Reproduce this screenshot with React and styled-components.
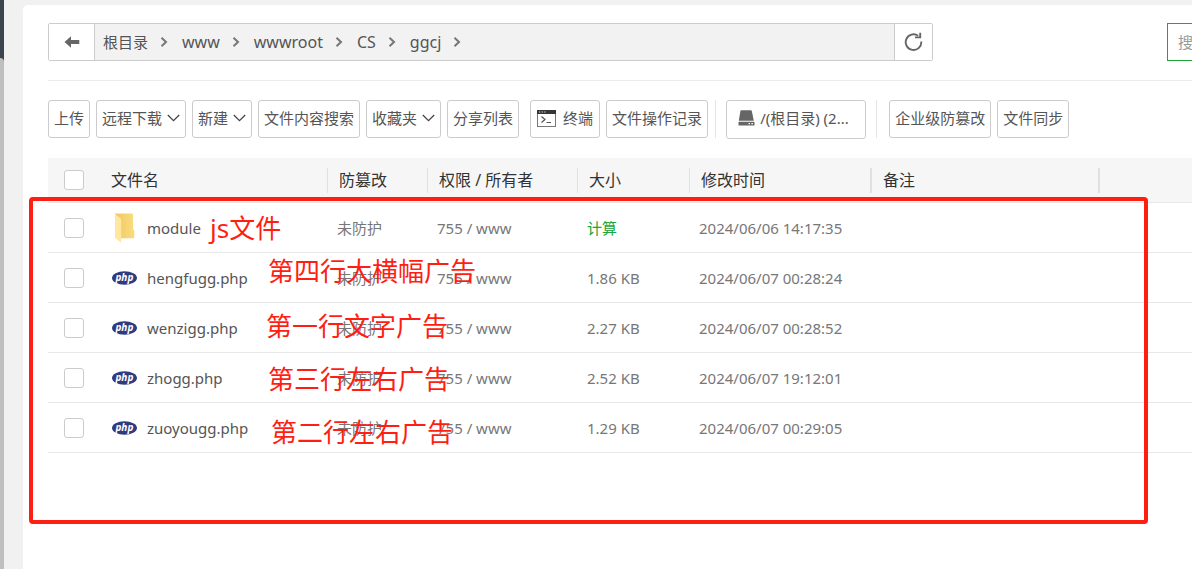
import styled, { createGlobalStyle } from "styled-components";

const GlobalStyle = createGlobalStyle`
    * {
        box-sizing: border-box;
    }
    body {
        margin: 0;
        overflow: hidden;
        background: #f1f1f1;
        color: #555;
        font-family: "Noto Sans", "Noto Sans CJK SC", sans-serif;
        font-size: 15px;
    }
    button, input {
        font: inherit;
        color: inherit;
    }
    a {
        color: inherit;
        text-decoration: none;
    }
`;

const Page = styled.div`
    position: relative;
    display: flex;
    min-height: 100vh;
    overflow: hidden;
`;

const SideStrip = styled.div`
    width: 4px;
    margin-right: 19px;
    padding-top: 58px;
    background: #3c444d;
`;

const SideThumb = styled.div`
    height: 100%;
    border-radius: 0 4px 0 0;
    background: #c0bfbe;
`;

const Panel = styled.main`
    flex: 1;
    min-width: 0;
    margin-top: 5px;
    padding: 18px 0 0 25px;
    border-radius: 5px 0 0 0;
    background: #fff;
    overflow: hidden;
`;

// the search box runs past the right edge of the panel
const TopBar = styled.div`
    display: flex;
    justify-content: space-between;
    gap: 234px;
    margin-right: -200px;
`;

const PathBar = styled.nav`
    display: flex;
    flex: 1;
    height: 38px;
    border: 1px solid #ccc;
    border-radius: 2px;
    background: #f2f2f2;
`;

const PathButton = styled.button`
    display: flex;
    align-items: center;
    justify-content: center;
    width: ${({ $wide }) => ($wide ? "46px" : "38px")};
    padding: 0;
    border: 0 solid #ccc;
    border-width: ${({ $wide }) => ($wide ? "0 1px 0 0" : "0 0 0 1px")};
    background: #fff;
`;

const Crumbs = styled.ol`
    display: flex;
    flex: 1;
    align-items: center;
    margin: 0;
    padding: 0 0 0 8px;
    list-style: none;
`;

const Crumb = styled.li`
    display: flex;
    align-items: center;
    gap: 12px;
    margin-right: 14px;
    font-size: ${({ $root }) => ($root ? "15px" : "16px")};
    line-height: 24px;
`;

const Search = styled.input`
    width: 225px;
    height: 38px;
    padding: 0 10px;
    border: 1px solid #20a53a;
    outline: none;
    &::placeholder {
        color: #999;
        opacity: 1;
    }
`;

const Toolbar = styled.div`
    display: flex;
    align-items: flex-start;
    gap: 6px;
    margin-top: 19px;
    padding: 19px 0;
    border-top: 1px solid #ececec;
`;

const ToolGroup = styled.div`
    display: flex;
    gap: 6px;
    margin-left: ${({ $apart }) => ($apart ? "5px" : "0")};
`;

const ToolButton = styled.button`
    display: flex;
    align-items: center;
    gap: 5px;
    height: 38px;
    padding: 0 5px 2px;
    border: 1px solid #ccc;
    border-radius: 3px;
    background: #fff;
    line-height: 22px;
    white-space: nowrap;
`;

const IconButton = styled(ToolButton)`
    gap: 7px;
    padding: 0 6px 2px;
`;

const DiskButton = styled(ToolButton)`
    width: 140px;
    height: 39px;
    padding: 0 11px 3px;
    margin: 0 3px;
`;

const ToolDivider = styled.span`
    width: 1px;
    height: 38px;
    margin: 0 1px;
    background: #e6e6e6;
`;

const FileTable = styled.table`
    width: 100%;
    table-layout: fixed;
    border-spacing: 0;
    text-align: left;
    white-space: nowrap;
`;

const Th = styled.th`
    height: 45px;
    padding: 0;
    border-bottom: 1px solid #e8e8e8;
    background: #f6f6f6;
    color: #333;
    font-size: 16px;
    font-weight: 400;
`;

const HeadCell = styled.div`
    display: flex;
    align-items: center;
    height: 25px;
    padding: 0 0 2px 11px;
    border-right: ${({ $line }) => $line || 0}px solid #e0e0e0;
`;

const Td = styled.td`
    height: 50px;
    padding: 0 0 0 9px;
    border-bottom: 1px solid #e8e8e8;
    color: #777;
`;

const CheckHead = styled(Th)`
    padding-left: 16px;
`;

const CheckCell = styled(Td)`
    padding-left: 16px;
`;

const CheckBox = styled.input`
    display: block;
    appearance: none;
    width: 20px;
    height: 20px;
    margin: 0;
    border: 1px solid #ccc;
    border-radius: 3px;
    background: #fff;
`;

const FileName = styled.a`
    display: flex;
    align-items: center;
    gap: 10px;
    padding-left: 3px;
    color: #555;
`;

const Calc = styled.a`
    color: #20a53a;
`;

const MarkBox = styled.div`
    position: absolute;
    top: 197px;
    right: 44px;
    left: 29px;
    height: 327px;
    border: 4px solid #ff1e12;
    border-radius: 4px;
    pointer-events: none;
`;

const MarkText = styled.span`
    position: absolute;
    top: ${({ $y }) => $y}px;
    left: ${({ $x }) => $x}px;
    color: #ff1e12;
    font-size: 26px;
    line-height: 36px;
    white-space: nowrap;
    pointer-events: none;
`;

const crumbs = ["根目录", "www", "wwwroot", "CS", "ggcj"];

const files = [
    { name: "module", folder: true, time: "2024/06/06 14:17:35" },
    { name: "hengfugg.php", size: "1.86 KB", time: "2024/06/07 00:28:24" },
    { name: "wenzigg.php", size: "2.27 KB", time: "2024/06/07 00:28:52" },
    { name: "zhogg.php", size: "2.52 KB", time: "2024/06/07 19:12:01" },
    { name: "zuoyougg.php", size: "1.29 KB", time: "2024/06/07 00:29:05" },
];

const columns = [
    { title: "文件名", line: 1 },
    { title: "防篡改", line: 1 },
    { title: "权限 / 所有者", line: 1 },
    { title: "大小", line: 1 },
    { title: "修改时间", line: 2 },
    { title: "备注", line: 2 },
    { title: "" },
];

const marks = [
    { text: "js文件", x: 210, y: 210 },
    { text: "第四行大横幅广告", x: 268, y: 253 },
    { text: "第一行文字广告", x: 266, y: 308 },
    { text: "第三行左右广告", x: 268, y: 361 },
    { text: "第二行左右广告", x: 271, y: 414 },
];

function ArrowLeft() {
    return (
        <svg width="16" height="12" viewBox="0 0 16 12" fill="#666">
            <path d="M0.5 6 L7 0.3 V4 H15.3 V8 H7 V11.7 Z" />
        </svg>
    );
}

function ChevronRight() {
    return (
        <svg width="8" height="10" viewBox="0 0 8 10" fill="none" stroke="#777" strokeWidth="2">
            <path d="M1.5 0.8 L6 5 L1.5 9.2" />
        </svg>
    );
}

function ChevronDown() {
    return (
        <svg width="13" height="8" viewBox="0 0 13 8" fill="none" stroke="#444" strokeWidth="1.3">
            <path d="M0.8 1 L6.5 6.6 L12.2 1" />
        </svg>
    );
}

function RefreshIcon() {
    return (
        <svg width="20" height="20" viewBox="0 0 20 20" fill="none" stroke="#666" strokeWidth="1.9">
            <path d="M17.3 9.5 A7.8 7.8 0 1 1 14.1 3.8" />
            <path d="M11 5.4 H16.2 V0.8" />
        </svg>
    );
}

function TerminalIcon() {
    return (
        <svg width="19" height="17" viewBox="0 0 19 17">
            <rect x="0.5" y="0.5" width="18" height="16" fill="#fff" stroke="#777" />
            <rect width="19" height="4" fill="#3a3535" />
            <path d="M2 2 H3.3 M4.6 2 H5.9 M7.2 2 H8.5" stroke="#e8d8c8" strokeWidth="1.2" />
            <path d="M4.5 6.5 L8 9.5 L4.5 12.5 M9.5 12.5 H14" fill="none" stroke="#555" strokeWidth="1.2" />
        </svg>
    );
}

function DiskIcon() {
    return (
        <svg width="17" height="16" viewBox="0 0 17 16" fill="#666">
            <path d="M3.2 0.3 H12.8 Q13.6 0.3 13.8 1.1 L15.8 10.8 H0.8 L2.4 1.1 Q2.6 0.3 3.2 0.3 Z" />
            <rect x="0.5" y="11.8" width="16" height="3.7" rx="0.6" />
            <path d="M10.5 13.6 H12 M13.4 13.6 H14.9" stroke="#fff" strokeWidth="1.3" />
        </svg>
    );
}

function FolderIcon() {
    return (
        <svg width="25" height="30" viewBox="0 0 25 30">
            <defs>
                <linearGradient id="folderBack">
                    <stop offset="0" stopColor="#efc860" />
                    <stop offset="1" stopColor="#fbdc80" />
                </linearGradient>
            </defs>
            <path d="M3 0.5 H20 Q21 0.5 21 1.5 V16 L22.3 17.5 V24.5 Q22.3 25.3 21.3 25.3 H8 Z" fill="url(#folderBack)" />
            <path d="M3 0.8 L8.6 5.4 Q9.2 6 9.2 7 V29.8 L3.6 25.4 Q3 25 3 24 Z" fill="#ffe7a0" />
        </svg>
    );
}

function PhpIcon() {
    return (
        <svg width="25" height="14" viewBox="0 0 25 14">
            <ellipse cx="12.5" cy="7" rx="12.5" ry="6.8" fill="#2f3b80" />
            <text
                x="12.4"
                y="9.6"
                fill="#fff"
                fontFamily="Open Sans, sans-serif"
                fontSize="10"
                fontStyle="italic"
                fontWeight="700"
                textAnchor="middle"
            >
                php
            </text>
        </svg>
    );
}

function FileRow({ file }) {
    return (
        <tr>
            <CheckCell>
                <CheckBox type="checkbox" aria-label={file.name} />
            </CheckCell>
            <Td>
                <FileName href="#">
                    {file.folder ? <FolderIcon /> : <PhpIcon />}
                    {file.name}
                </FileName>
            </Td>
            <Td>未防护</Td>
            <Td>755 / www</Td>
            <Td>{file.folder ? <Calc href="#">计算</Calc> : file.size}</Td>
            <Td>{file.time}</Td>
            <Td />
            <Td />
        </tr>
    );
}

export default function App() {
    return (
        <Page>
            <GlobalStyle />
            <SideStrip>
                <SideThumb />
            </SideStrip>
            <Panel>
                <TopBar>
                    <PathBar>
                        <PathButton $wide aria-label="返回">
                            <ArrowLeft />
                        </PathButton>
                        <Crumbs>
                            {crumbs.map((crumb, i) => (
                                <Crumb key={crumb} $root={i === 0}>
                                    <a href="#">{crumb}</a>
                                    <ChevronRight />
                                </Crumb>
                            ))}
                        </Crumbs>
                        <PathButton aria-label="刷新">
                            <RefreshIcon />
                        </PathButton>
                    </PathBar>
                    <Search placeholder="搜索文件" aria-label="搜索文件" />
                </TopBar>

                <Toolbar>
                    <ToolGroup>
                        <ToolButton>上传</ToolButton>
                        <ToolButton>远程下载<ChevronDown /></ToolButton>
                        <ToolButton>新建<ChevronDown /></ToolButton>
                        <ToolButton>文件内容搜索</ToolButton>
                        <ToolButton>收藏夹<ChevronDown /></ToolButton>
                        <ToolButton>分享列表</ToolButton>
                    </ToolGroup>
                    <ToolGroup $apart>
                        <IconButton><TerminalIcon />终端</IconButton>
                        <ToolButton>文件操作记录</ToolButton>
                    </ToolGroup>
                    <ToolDivider />
                    <DiskButton><DiskIcon />/(根目录) (2...</DiskButton>
                    <ToolDivider />
                    <ToolGroup $apart>
                        <ToolButton>企业级防篡改</ToolButton>
                        <ToolButton>文件同步</ToolButton>
                    </ToolGroup>
                </Toolbar>

                <FileTable>
                    <colgroup>
                        <col width="52" />
                        <col width="228" />
                        <col width="100" />
                        <col width="150" />
                        <col width="112" />
                        <col width="182" />
                        <col width="228" />
                        <col />
                    </colgroup>
                    <thead>
                        <tr>
                            <CheckHead>
                                <CheckBox type="checkbox" aria-label="全选" />
                            </CheckHead>
                            {columns.map((column) => (
                                <Th key={column.title}>
                                    <HeadCell $line={column.line}>{column.title}</HeadCell>
                                </Th>
                            ))}
                        </tr>
                    </thead>
                    <tbody>
                        {files.map((file) => (
                            <FileRow key={file.name} file={file} />
                        ))}
                    </tbody>
                </FileTable>
            </Panel>

            <MarkBox />
            {marks.map((mark) => (
                <MarkText key={mark.text} $x={mark.x} $y={mark.y}>{mark.text}</MarkText>
            ))}
        </Page>
    );
}
